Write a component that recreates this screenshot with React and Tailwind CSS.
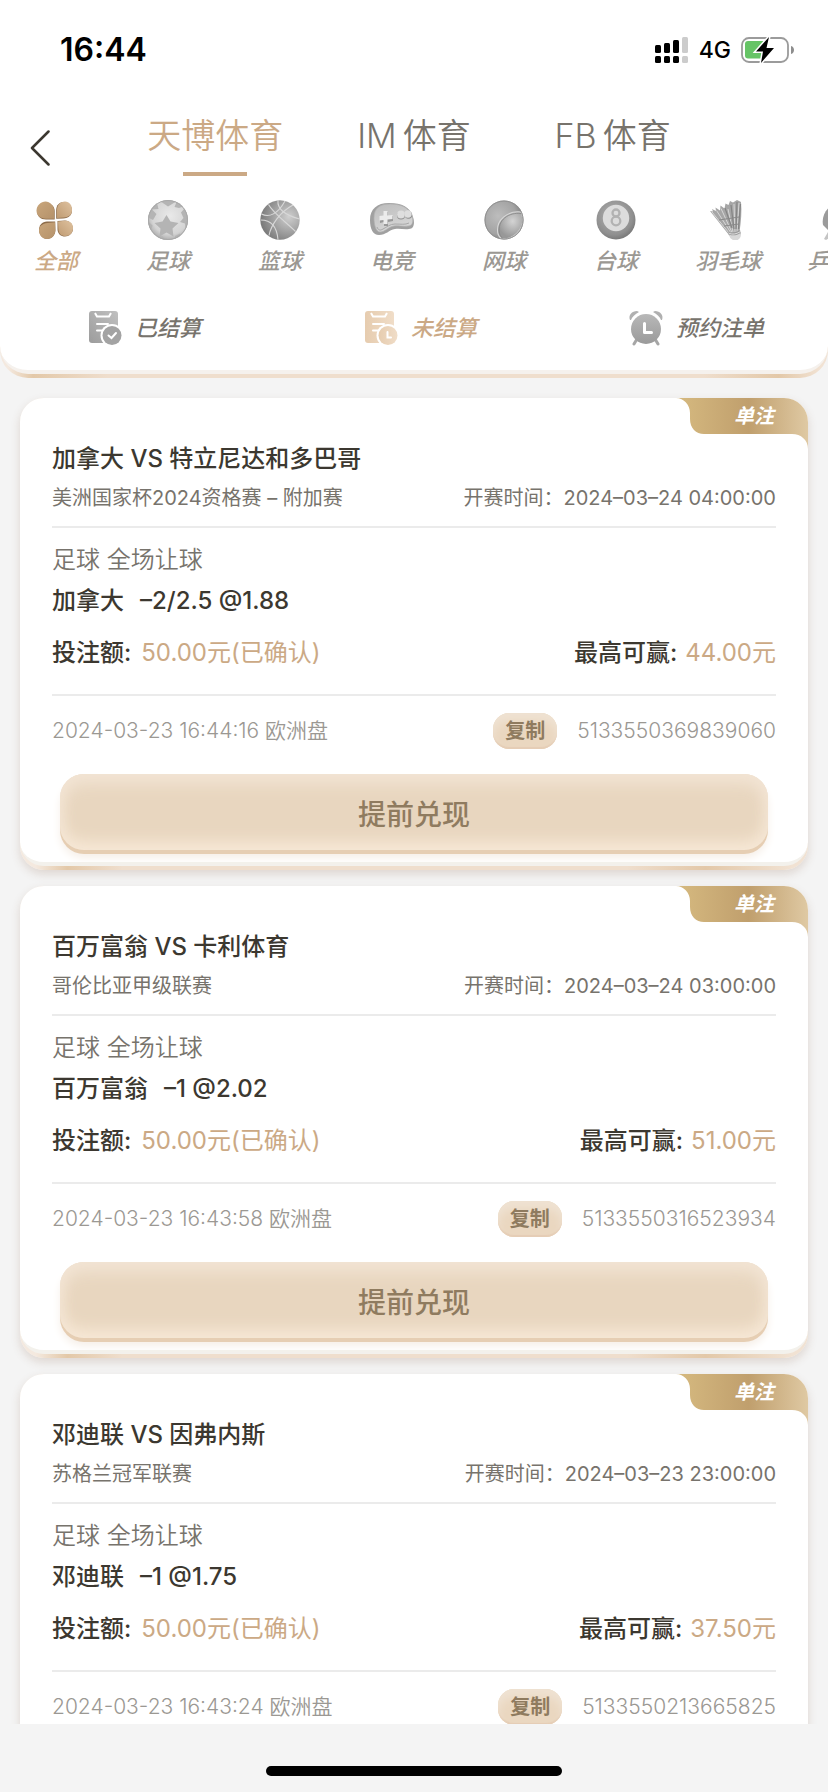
import clsx from "clsx"

const TABS = ["天博体育", "IM\u2009体育", "FB\u2009体育"]

const BETS = [
  {
    match: "加拿大 VS 特立尼达和多巴哥",
    league: "美洲国家杯2024资格赛 – 附加赛",
    startTime: "2024–03–24 04:00:00",
    pick: "加拿大",
    odds: "–2/2.5 @1.88",
    stake: "50.00元(已确认)",
    maxWin: "44.00元",
    placedAt: "2024-03-23 16:44:16 欧洲盘",
    orderId: "5133550369839060",
  },
  {
    match: "百万富翁 VS 卡利体育",
    league: "哥伦比亚甲级联赛",
    startTime: "2024–03–24 03:00:00",
    pick: "百万富翁",
    odds: "–1 @2.02",
    stake: "50.00元(已确认)",
    maxWin: "51.00元",
    placedAt: "2024-03-23 16:43:58 欧洲盘",
    orderId: "5133550316523934",
  },
  {
    match: "邓迪联 VS 因弗内斯",
    league: "苏格兰冠军联赛",
    startTime: "2024–03–23 23:00:00",
    pick: "邓迪联",
    odds: "–1 @1.75",
    stake: "50.00元(已确认)",
    maxWin: "37.50元",
    placedAt: "2024-03-23 16:43:24 欧洲盘",
    orderId: "5133550213665825",
  },
]

const CloverIcon = () => (
  <svg className="h-10 w-10" viewBox="0 0 40 40">
    <defs>
      <linearGradient id="clover" x1="0" y1="0" x2="1" y2="1">
        <stop offset="0" stopColor="#c9a67c" />
        <stop offset="1" stopColor="#b5926a" />
      </linearGradient>
      <linearGradient id="clover-light" x1="1" y1="0" x2="0" y2="1">
        <stop offset="0" stopColor="#dfc2a0" />
        <stop offset="1" stopColor="#bf9b72" />
      </linearGradient>
    </defs>
    <g fill="#8d6c4a">
      <path d="M18.700 19.500H10C4.500 19.500 1 16 1 11S5 2.500 9.500 2.500 18.700 6 18.700 11Z" />
      <path d="M20.200 18.700V10C20.200 5 23.500 2 28 2s8 4 8 8.500S33 18 27 18.500Z" />
      <path d="M19.200 21.500H11c-5 0-8 4-8 8.500S6.500 39 11 39s8.500-4 8.500-9Z" />
      <path d="M21.500 21V29c0 5 3.500 7.500 7.500 7.500s8-3.500 8-7.500-3-8.500-8-8.500Z" />
    </g>
    <path fill="url(#clover)" d="M18 18.700h-8C4.500 18.700 .5 15.500 .5 10.500S5 1.500 9.500 1.500 18.200 6 18.200 11Z" />
    <path fill="url(#clover-light)" d="M21 17.900V10c0-5 3.500-8.500 8-8.500s7 4 7 8.500-3 7-8 7.400Z" />
    <path fill="url(#clover)" d="M19 22.300 11.500 23C6.500 23.500 3 26 3 30.500S6.500 39 11 39s8-3.500 8.200-8.500Z" />
    <path fill="url(#clover-light)" d="M22 21.500l.3 7C22.500 33.500 25 36 29.500 36s7.500-3.500 7.500-8-3-7.500-8-7.300Z" />
  </svg>
)

const FootballIcon = () => (
  <svg className="h-10 w-10" viewBox="0 0 40 40">
    <defs>
      <radialGradient id="football" cx=".55" cy=".4" r=".65">
        <stop offset="0" stopColor="#e9e9e9" />
        <stop offset=".7" stopColor="#d4d4d4" />
        <stop offset="1" stopColor="#a4a4a4" />
      </radialGradient>
      <clipPath id="football-clip">
        <circle cx="20" cy="20" r="20" />
      </clipPath>
    </defs>
    <circle cx="20" cy="20" r="20" fill="url(#football)" />
    <g clipPath="url(#football-clip)" fill="#b4b4b4">
      <path d="M18.500 15l4 6.500 8 1.500-6 5.500 1 8-7-4-7 4 1-8-6-5.500 8-1.500Z" />
      <path d="M12 1l8 5.500L29 1l-2.500 6L31 8l6-2-8-8H14Z" />
      <path d="M9 3l1.500 6L4 9.500 8.500 14 5 20l-6-3V8Z" />
      <path d="M37 8l-4 4.500 2.500 5.500L32 22l5 1.500.5 6L42 22V10Z" />
      <path d="M0 21l4.500 4.500L3 31l-5-4ZM10 36l5 .5 2 4-7 1ZM27 36l5-2.500 1 4-6 3Z" />
    </g>
    <circle cx="20" cy="20" r="19.500" fill="none" stroke="#a8a8a8" />
  </svg>
)

const BasketballIcon = () => (
  <svg className="h-10 w-10" viewBox="0 0 40 40">
    <defs>
      <radialGradient id="basketball" cx=".72" cy=".42" r=".7">
        <stop offset="0" stopColor="#cfcfcf" />
        <stop offset=".5" stopColor="#a6a6a6" />
        <stop offset="1" stopColor="#7c7c7c" />
      </radialGradient>
    </defs>
    <circle cx="20" cy="20" r="19.700" fill="url(#basketball)" />
    <g fill="none" stroke="#d8d8d8" strokeWidth="1.100">
      <path d="M8.500 4.500C13 13 27 23 35.500 31.500" />
      <path d="M9 35.500C11 25 20 12 33 5" />
      <path d="M.8 20C12 20 17 28 18 39.500" />
      <path d="M18 .5C17 9 25 15 39.500 19" />
      <path d="M1.500 14C9 18 18 14 25 1" />
    </g>
  </svg>
)

const GamepadIcon = () => (
  <svg className="h-10 w-11" viewBox="0 0 44 40">
    <defs>
      <linearGradient id="gamepad" x1="0" y1="0" x2=".4" y2="1">
        <stop offset="0" stopColor="#bcbcbc" />
        <stop offset="1" stopColor="#d6d6d6" />
      </linearGradient>
    </defs>
    <path
      fill="#a0a0a0"
      d="M0 20C0 9 7 3 19 3c13 0 21 4 24 14 2 6 1 12-4 12-5 1-9-1-14 0-6 1-9 6-16 6C3 35 0 29 0 20Z"
    />
    <path
      fill="url(#gamepad)"
      stroke="#b2b2b2"
      strokeWidth=".7"
      d="M4 18C4 8 10 4 20 4c12 0 19 4 22 12 2 6 0 10-4 10-5 1-9-1-14 0-6 1-9 6-14 6-4 0-6-7-6-14Z"
    />
    <path fill="none" stroke="#a8a8a8" d="M7 27c1 3 3 4 6 2 4-2 7-5 12-5 6 0 10 1 14-1" />
    <path fill="#999" d="M14 12h4v5l5-1v5l-5 1v4h-4v-4l-4 1v-5l4-1Z" />
    <path fill="#ececec" d="M13.500 11h4v4.500l5-.5v4l-5 .5v4.500h-4v-4l-4 .5v-4.500l4-.5Z" />
    <circle cx="31" cy="15.500" r="4" fill="#909090" />
    <circle cx="31" cy="14.500" r="3.900" fill="#dedede" />
    <circle cx="38.500" cy="15" r="3.700" fill="#909090" />
    <circle cx="38" cy="14" r="3.700" fill="#dedede" />
  </svg>
)

const TennisIcon = () => (
  <svg className="h-10 w-10" viewBox="0 0 40 40">
    <defs>
      <radialGradient id="tennis" cx=".35" cy=".4" r=".65">
        <stop offset="0" stopColor="#bdbdbd" />
        <stop offset=".7" stopColor="#a3a3a3" />
        <stop offset="1" stopColor="#808080" />
      </radialGradient>
      <radialGradient id="tennis-face" cx=".6" cy=".35" r=".6">
        <stop offset="0" stopColor="#d4d4d4" />
        <stop offset="1" stopColor="#989898" />
      </radialGradient>
    </defs>
    <circle cx="20" cy="20" r="19.500" fill="url(#tennis)" />
    <path
      fill="url(#tennis-face)"
      stroke="#d8d8d8"
      strokeWidth="1.100"
      d="M37 12C24 10.500 11 20 14 34c.5 1.500 1.500 3 3 4.500A19 19 0 0 0 37 12Z"
    />
    <path fill="none" stroke="#858585" strokeWidth=".8" d="M37 13.500C25 12 13 20 15.500 33c.5 2 1 3.500 3 5" />
    <circle cx="20" cy="20" r="19" fill="none" stroke="#8f8f8f" />
  </svg>
)

const BilliardIcon = () => (
  <svg className="h-10 w-10" viewBox="0 0 40 40">
    <defs>
      <radialGradient id="billiard" cx=".45" cy=".4" r=".6">
        <stop offset="0" stopColor="#b5b5b5" />
        <stop offset=".8" stopColor="#8f8f8f" />
        <stop offset="1" stopColor="#7a7a7a" />
      </radialGradient>
    </defs>
    <circle cx="20" cy="20" r="19.500" fill="url(#billiard)" />
    <circle cx="20" cy="18" r="13.200" fill="#dcdcdc" />
    <circle cx="20" cy="13" r="3.500" fill="none" stroke="#b2b2b2" strokeWidth="2.300" />
    <circle cx="20" cy="21" r="4.300" fill="none" stroke="#b2b2b2" strokeWidth="2.300" />
  </svg>
)

const ShuttlecockIcon = () => (
  <svg className="h-10 w-10" viewBox="0 0 40 40">
    <path
      fill="#a6a6a6"
      d="M2 11l3 .5-1-2.500 4 2-.5-3.500 4.500 3 .5-5 4 3 1-5 3 1.500 1.500-4 3 1.500L29 0l4 2c1 9 0 20-1.500 30L21 35Z"
    />
    <path
      fill="none"
      stroke="#d6d6d6"
      d="M4 12l17 21M8.500 10.500L23 33M13 8.500l11 24M20 9l5 23M26 4l1 28M31 3l-2 29"
    />
    <path
      fill="none"
      stroke="#858585"
      strokeWidth="1.200"
      d="M17 8l7 20M23 5l3 24M29 2l-1 27M32.500 4l-2 25"
    />
    <path fill="none" stroke="#8a8a8a" d="M11 20l20-3M16 26l15-2" />
    <path fill="#9a9a9a" d="M20 31.500c4 2 8 1 12-1.500l1 4c-3 3-8 3.500-12 1.500Z" />
    <path fill="#d8d8d8" d="M21 34.500c4 1.500 8 1 11.500-1.500C34 37 31 40.500 27.500 40.500S21.500 38 21 34.500Z" />
    <path fill="none" stroke="#f0f0f0" strokeWidth=".8" d="M20.500 33c4 2 8 1 12-1.500" />
  </svg>
)

const PingPongIcon = () => (
  <svg className="h-10 w-10" viewBox="0 0 40 40">
    <path fill="#9b9b9b" d="M3 25C1 14 9 3 22 3c10 0 16 7 16 15S30 33 20 32L8 30Z" />
    <path fill="#c4c4c4" d="M4 39l4-7 5 4-7 4Z" />
  </svg>
)

const SPORTS = [
  { name: "全部", Icon: CloverIcon },
  { name: "足球", Icon: FootballIcon },
  { name: "篮球", Icon: BasketballIcon },
  { name: "电竞", Icon: GamepadIcon },
  { name: "网球", Icon: TennisIcon },
  { name: "台球", Icon: BilliardIcon },
  { name: "羽毛球", Icon: ShuttlecockIcon },
  { name: "乒乓球", Icon: PingPongIcon },
]

const SettledIcon = () => (
  <svg className="h-9 w-9" viewBox="0 0 36 36">
    <defs>
      <linearGradient id="settled" x1="0" y1="1" x2="1" y2="0">
        <stop offset="0" stopColor="#9c9c9c" />
        <stop offset="1" stopColor="#c0c0c0" />
      </linearGradient>
    </defs>
    <rect x="2" y="1" width="29" height="32" rx="3" fill="url(#settled)" />
    <path fill="none" stroke="#fff" strokeWidth="2" d="M8 3l2 3.500h12L24 3" />
    <path stroke="#fff" strokeWidth="2" strokeLinecap="round" d="M10 14h11M10 20.500h5" />
    <circle cx="25" cy="25.500" r="11.500" fill="#fff" />
    <circle cx="25" cy="25.500" r="9.500" fill="#a3a3a3" />
    <path fill="none" stroke="#fff" strokeWidth="2" strokeLinecap="round" d="M21.500 25.500l3 2.500 4.500-5" />
  </svg>
)

const UnsettledIcon = () => (
  <svg className="h-9 w-9" viewBox="0 0 36 36">
    <defs>
      <linearGradient id="unsettled" x1="0" y1="0" x2="1" y2="0">
        <stop offset="0" stopColor="#e6ccaf" />
        <stop offset="1" stopColor="#f0ddc8" />
      </linearGradient>
    </defs>
    <rect x="2" y="1" width="29" height="32" rx="3" fill="url(#unsettled)" />
    <path fill="none" stroke="#fff" strokeWidth="2" d="M8 3l2 3.500h12L24 3" />
    <path stroke="#fff" strokeWidth="2" strokeLinecap="round" d="M10 14h11M10 20.500h5" />
    <circle cx="25" cy="25.500" r="11.500" fill="#fff" />
    <circle cx="25" cy="25.500" r="9.500" fill="url(#unsettled)" />
    <path fill="none" stroke="#fff" strokeWidth="2" strokeLinecap="round" d="M24.500 22v5.500h3.500" />
  </svg>
)

const AlarmIcon = () => (
  <svg className="h-9 w-9" viewBox="0 0 36 36">
    <defs>
      <linearGradient id="alarm" x1="0" y1="0" x2="0" y2="1">
        <stop offset="0" stopColor="#b8b8b8" />
        <stop offset="1" stopColor="#9a9a9a" />
      </linearGradient>
    </defs>
    <path stroke="#a6a6a6" strokeWidth="3" strokeLinecap="round" d="M9 29l-3 5M27 29l3 5" />
    <circle cx="18" cy="19" r="15" fill="url(#alarm)" />
    <path fill="#b0b0b0" d="M2 10C0 5 4 1 9 1l2 1C7 4 4 7 3 10ZM34 10c2-5-2-9-7-9l-2 1c4 2 7 5 8 8Z" />
    <path
      fill="none"
      stroke="#fff"
      strokeWidth="3"
      strokeLinecap="round"
      strokeLinejoin="round"
      d="M16.500 13.500v9h7"
    />
  </svg>
)

const FILTERS = [
  { name: "已结算", Icon: SettledIcon },
  { name: "未结算", Icon: UnsettledIcon },
  { name: "预约注单", Icon: AlarmIcon },
]

const StatusBar = () => (
  <div className="flex h-[100px] items-center justify-between pr-[33px] pl-[60px] text-black">
    <span className="text-[32px] leading-10 font-semibold">16:44</span>
    <div className="flex items-center gap-[10px]">
      <svg className="h-[26px] w-[34px]" viewBox="0 0 34 26">
        <rect x="0" y="8" width="6" height="8" rx="1.500" />
        <rect x="9" y="6" width="6" height="10" rx="1.500" />
        <rect x="18" y="3" width="6" height="13" rx="1.500" />
        <rect x="27" y="0" width="6" height="16" rx="1.500" fill="#ccc" />
        <rect x="0" y="19" width="6" height="7" rx="1.500" />
        <rect x="9" y="19" width="6" height="7" rx="1.500" />
        <rect x="18" y="19" width="6" height="7" rx="1.500" />
        <rect x="27" y="19" width="6" height="7" rx="1.500" fill="#ccc" />
      </svg>
      <span className="text-[23px] leading-8 font-medium">4G</span>
      <svg className="h-[26px] w-[54px]" viewBox="0 0 54 26">
        <rect x="1" y="1" width="46" height="24" rx="7" fill="none" stroke="#9b9b9b" strokeWidth="1.800" />
        <path fill="#66c466" d="M7 4h15v17.500H7a3 3 0 0 1-3-3V7a3 3 0 0 1 3-3Z" />
        <path fill="#8e8e8e" d="M50 9c4 1 4 7 0 8Z" />
        <path
          stroke="#fff"
          strokeWidth="3"
          paintOrder="stroke"
          d="M28 0L15 14.500h7L20 26l13-15h-7.500Z"
        />
      </svg>
    </div>
  </div>
)

const BetCard = ({ match, league, startTime, pick, odds, stake, maxWin, placedAt, orderId }) => (
  <article className="relative rounded-[24px] bg-[linear-gradient(90deg,#f4e9df_2%,#e3c8a8_6%,#efdecd_13%,#efdecd_77%,#e3c8a8_87%,#f1e2d3_98%)] pb-1 shadow-[0_4px_10px_rgba(120,80,50,0.18)]">
    <div className="rounded-[24px] border-b-4 border-[#f3f1ec] bg-white px-8 pt-10 pb-3">
      <div className="border-b-2 border-[#ebebeb] pb-[10px]">
        <h2 className="text-2xl leading-[42px] font-medium text-[#3c3830]">{match}</h2>
        <div className="flex justify-between text-xl leading-9 text-[#77736c]">
          <span>{league}</span>
          <span>开赛时间：{startTime}</span>
        </div>
      </div>
      <div className="border-b-2 border-[#ebebeb] pt-3 pb-5 text-2xl leading-[42px] text-[#3c3830]">
        <p className="leading-10 font-[350] text-[#77736c]">足球 全场让球</p>
        <p className="flex gap-4 font-medium">
          <span>{pick}</span>
          <span>{odds}</span>
        </p>
        <div className="mt-[10px] flex justify-between">
          <p className="flex gap-[10px]">
            <span className="font-medium">投注额:</span>
            <span className="text-[#cba985]">{stake}</span>
          </p>
          <p className="flex gap-2">
            <span className="font-medium">最高可赢:</span>
            <span className="text-[#cba985]">{maxWin}</span>
          </p>
        </div>
      </div>
      <div className="flex h-[70px] items-center text-[21px] font-[350] text-[#9b9893]">
        <span className="flex-1">{placedAt}</span>
        <button className="mr-5 h-9 w-16 rounded-[16px] bg-[#ead7c0] text-xl leading-8 font-bold text-[#8f7b5f] shadow-[inset_0_8px_8px_#efe2d2,inset_0_-2px_1px_#e5cdb5]">
          复制
        </button>
        <span>{orderId}</span>
      </div>
      <div className="px-2 pt-2">
        <button className="h-[76px] w-full rounded-[24px] bg-[#e8d6bf] pt-[6px] text-[28px] leading-10 font-medium text-[#8f7b5f] shadow-[inset_0_10px_16px_#f2e4d4,inset_0_-8px_16px_#f8e9d7,0_4px_0_#e6ceb3,0_8px_8px_#f6efe8]">
          提前兑现
        </button>
      </div>
    </div>
    <div className="absolute top-0 right-0 flex h-9 items-center pr-[34px]">
      <svg className="absolute top-0 right-0 h-[51px] w-[132px]" viewBox="0 0 132 51">
        <defs>
          <linearGradient id="ribbon">
            <stop offset="0" stopColor="#d6ba80" />
            <stop offset=".55" stopColor="#c09f6d" />
            <stop offset="1" stopColor="#dfc9a3" />
          </linearGradient>
        </defs>
        <path
          fill="url(#ribbon)"
          d="M0 0C8 0 14 7 14 15v6c0 9 6 15 14 15h88c9 0 16 6 16 15V24A24 24 0 0 0 108 0Z"
        />
      </svg>
      <span className="relative text-xl font-bold text-white italic">单注</span>
    </div>
  </article>
)

const App = () => {
  return (
    <div className="flex h-screen flex-col overflow-hidden bg-[#f4f4f4] font-['Inter','Noto_Sans_CJK_SC',sans-serif]">
      <header className="shrink-0 rounded-b-[28px] bg-[linear-gradient(90deg,#f4e9df_1%,#e3c8a8_4%,#efdecd_13%,#efdecd_85%,#e3c8a8_94%,#f1e2d3_99%)] pb-1">
        <div className="rounded-b-[28px] border-b-4 border-[#f5f1ed] bg-white pb-[22px]">
          <StatusBar />
          <div className="flex h-[76px]">
            <button aria-label="返回" className="w-[116px] pt-5 pl-[30px]">
              <svg className="h-9 w-5" viewBox="0 0 20 36">
                <path
                  fill="none"
                  stroke="#3c3830"
                  strokeWidth="2.500"
                  strokeLinecap="round"
                  strokeLinejoin="round"
                  d="M18.500 1.500L2 18l16.500 16.500"
                />
              </svg>
            </button>
            <nav className="grid flex-1 grid-cols-3">
              {TABS.map((tab, index) => (
                <button
                  key={tab}
                  className={clsx(
                    "flex flex-col items-center justify-between text-[34px] leading-[72px] font-[350] whitespace-nowrap",
                    index === 0 ? "text-[#cba985]" : "text-[#77736c]"
                  )}
                >
                  {tab}
                  {index === 0 && <span className="h-1 w-16 bg-[#cba985]" />}
                </button>
              ))}
            </nav>
            <div className="w-[116px]" />
          </div>

          <nav className="mt-6 flex overflow-hidden">
            {SPORTS.map(({ name, Icon }, index) => (
              <button
                key={name}
                className={clsx(
                  "flex w-28 shrink-0 flex-col items-center gap-1 text-[22px] leading-[34px] font-medium italic",
                  index === 0 ? "text-[#cba985]" : "text-[#9b9893]"
                )}
              >
                <Icon />
                {name}
              </button>
            ))}
          </nav>

          <nav className="mt-[30px] grid grid-cols-3">
            {FILTERS.map(({ name, Icon }, index) => (
              <button
                key={name}
                className={clsx(
                  "flex h-10 items-center justify-center gap-3 pl-3 text-[22px] font-medium italic",
                  index === 1 ? "text-[#cba985]" : "text-[#77736c]"
                )}
              >
                <Icon />
                {name}
              </button>
            ))}
          </nav>
        </div>
      </header>

      <main className="flex min-h-0 flex-1 flex-col gap-4 overflow-hidden px-5 pt-5">
        {BETS.map((bet) => (
          <BetCard key={bet.orderId} {...bet} />
        ))}
      </main>

      <footer className="flex h-[68px] shrink-0 justify-center pt-[42px]">
        <div className="h-[10px] w-[296px] rounded-full bg-black" />
      </footer>
    </div>
  )
}

export default App
